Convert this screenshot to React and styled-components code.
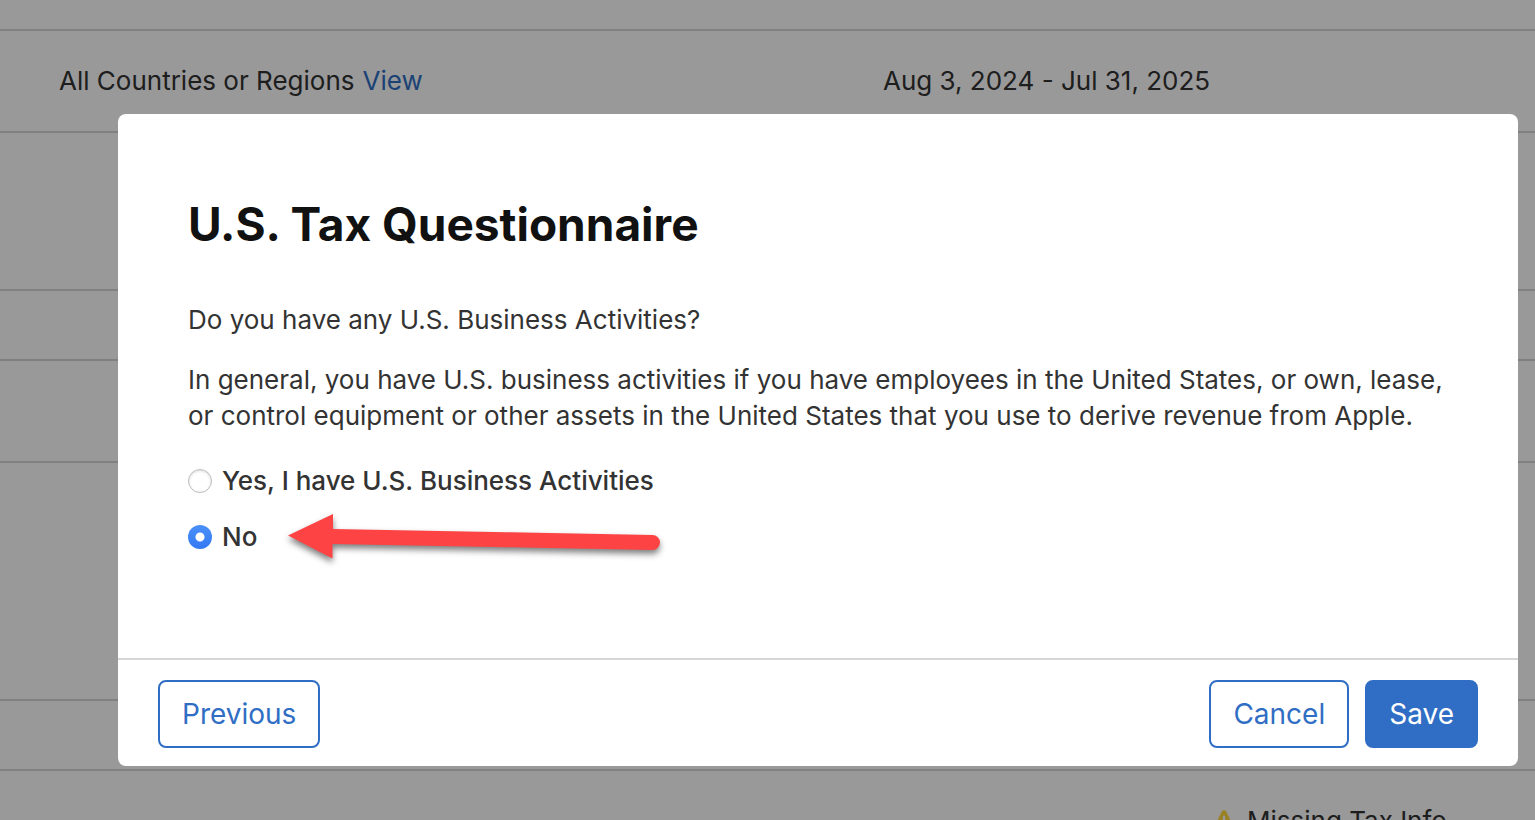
import React, { useState } from "react";
import styled, { createGlobalStyle, css } from "styled-components";

const GlobalStyle = createGlobalStyle`
  *, *::before, *::after { box-sizing: border-box; }
  body {
    margin: 0;
    background: #fff;
    color: #333;
    font-family: Inter, "Liberation Sans", sans-serif;
    font-size: 26px;
    line-height: 36px;
  }
  h1, p, fieldset { margin: 0; padding: 0; border: 0; }
`;

const Page = styled.main`
  height: 100vh;
  overflow: hidden;
`;

const Row = styled.div`
  display: grid;
  grid-template-columns: minmax(0, 824fr) minmax(0, 364fr) minmax(0, 347fr);
  align-items: center;
  height: ${({ $height }) => $height}px;
  border-bottom: 2px solid #d6d6d6;
`;

const Cell = styled.div`
  display: flex;
  align-items: center;
  gap: 8px;
  padding-left: 59px;
  white-space: nowrap;
`;

const StatusCell = styled(Cell)`
  grid-column: 3;
  padding-left: 25px;
  gap: 12px;
`;

const Link = styled.a`
  color: #2f6ec4;
  text-decoration: none;
`;

const Backdrop = styled.div`
  position: fixed;
  inset: 0;
  display: flex;
  align-items: flex-start;
  padding: 114px 17px 0 118px;
  background: rgba(0, 0, 0, 0.4);
`;

const Dialog = styled.section`
  flex: 1;
  background: #fff;
  border-radius: 8px;
`;

const Body = styled.div`
  padding: 82px 70px 103px;
`;

const Title = styled.h1`
  margin-bottom: 50px;
  color: #111;
  font-size: 46px;
  font-weight: 700;
  line-height: 56px;
`;

const Paragraph = styled.p`
  margin-bottom: 24px;
`;

const Options = styled.fieldset`
  display: flex;
  flex-direction: column;
  align-items: flex-start;
  gap: 20px;
  padding-top: 5px;
`;

const Option = styled.label`
  position: relative;
  display: flex;
  align-items: center;
  gap: 10px;
  font-weight: 500;
`;

const Radio = styled.input`
  appearance: none;
  width: 24px;
  height: 24px;
  margin: 0;
  border-radius: 50%;
  border: 1px solid #bdbdbd;
  background: #fff;
  box-shadow: inset 0 1px 3px rgba(0, 0, 0, 0.15);

  &:checked {
    border: 0;
    background: radial-gradient(circle, #fff 4px, transparent 5px),
      linear-gradient(#4a90f7, #3478f6);
    box-shadow: none;
  }
`;

const Arrow = styled.svg`
  position: absolute;
  left: 92px;
  top: -13px;
  width: 390px;
  height: 64px;
  pointer-events: none;
  filter: drop-shadow(0 4px 3px rgba(0, 0, 0, 0.5));
`;

const Footer = styled.footer`
  display: flex;
  gap: 16px;
  padding: 20px 40px 18px;
  border-top: 2px solid #d6d6d6;
`;

const Button = styled.button`
  height: 68px;
  padding: 0 22px;
  border: 2px solid #2f6ec4;
  border-radius: 8px;
  background: #fff;
  color: #2f6ec4;
  font: inherit;
  font-size: 28px;
  ${({ $primary }) => $primary && css`
    background: #2f6ec4;
    color: #fff;
  `}
  ${({ $start }) => $start && css`
    margin-right: auto;
  `}
`;

function WarningIcon() {
  return (
    <svg width="22" height="22" viewBox="0 0 22 22" aria-hidden="true">
      <path d="M8.8 1.5Q11 -1.5 13.2 1.5L21.4 18Q22.5 21 19.5 21H2.5Q-.5 21 .6 18Z" fill="#ffd840" />
      <path d="M11 7v7M11 17v1" stroke="#fff" strokeWidth="2.4" strokeLinecap="round" />
    </svg>
  );
}

export default function App() {
  const [answer, setAnswer] = useState("no");
  const choose = (event) => setAnswer(event.target.value);

  return (
    <>
      <GlobalStyle />
      <Page>
        <Row $height={31} />
        <Row $height={102}>
          <Cell>
            <span>All Countries or Regions</span>
            <Link href="#regions">View</Link>
          </Cell>
          <Cell>Aug 3, 2024 - Jul 31, 2025</Cell>
        </Row>
        {[158, 70, 102, 238, 70].map((height, i) => (
          <Row key={i} $height={height} />
        ))}
        <Row $height={102}>
          <StatusCell>
            <WarningIcon />
            <span>Missing Tax Info</span>
          </StatusCell>
        </Row>
      </Page>
      <Backdrop>
        <Dialog role="dialog" aria-modal="true" aria-labelledby="dialog-title">
          <Body>
            <Title id="dialog-title">U.S. Tax Questionnaire</Title>
            <Paragraph id="question">Do you have any U.S. Business Activities?</Paragraph>
            <Paragraph>
              In general, you have U.S. business activities if you have employees in the United States, or own, lease,
              or control equipment or other assets in the United States that you use to derive revenue from Apple.
            </Paragraph>
            <Options aria-labelledby="question">
              <Option htmlFor="answer-yes">
                <Radio id="answer-yes" type="radio" name="activities" value="yes" checked={answer === "yes"} onChange={choose} />
                Yes, I have U.S. Business Activities
              </Option>
              <Option htmlFor="answer-no">
                <Radio id="answer-no" type="radio" name="activities" value="no" checked={answer === "no"} onChange={choose} />
                No
                <Arrow viewBox="0 0 390 64" aria-hidden="true">
                  <path d="M8 29.500L53 8V23L372.500 29A7.500 7.500 0 0 1 372.500 44L52.500 38V52.500Z" fill="#fd4343" />
                </Arrow>
              </Option>
            </Options>
          </Body>
          <Footer>
            <Button type="button" $start>Previous</Button>
            <Button type="button">Cancel</Button>
            <Button type="button" $primary>Save</Button>
          </Footer>
        </Dialog>
      </Backdrop>
    </>
  );
}
